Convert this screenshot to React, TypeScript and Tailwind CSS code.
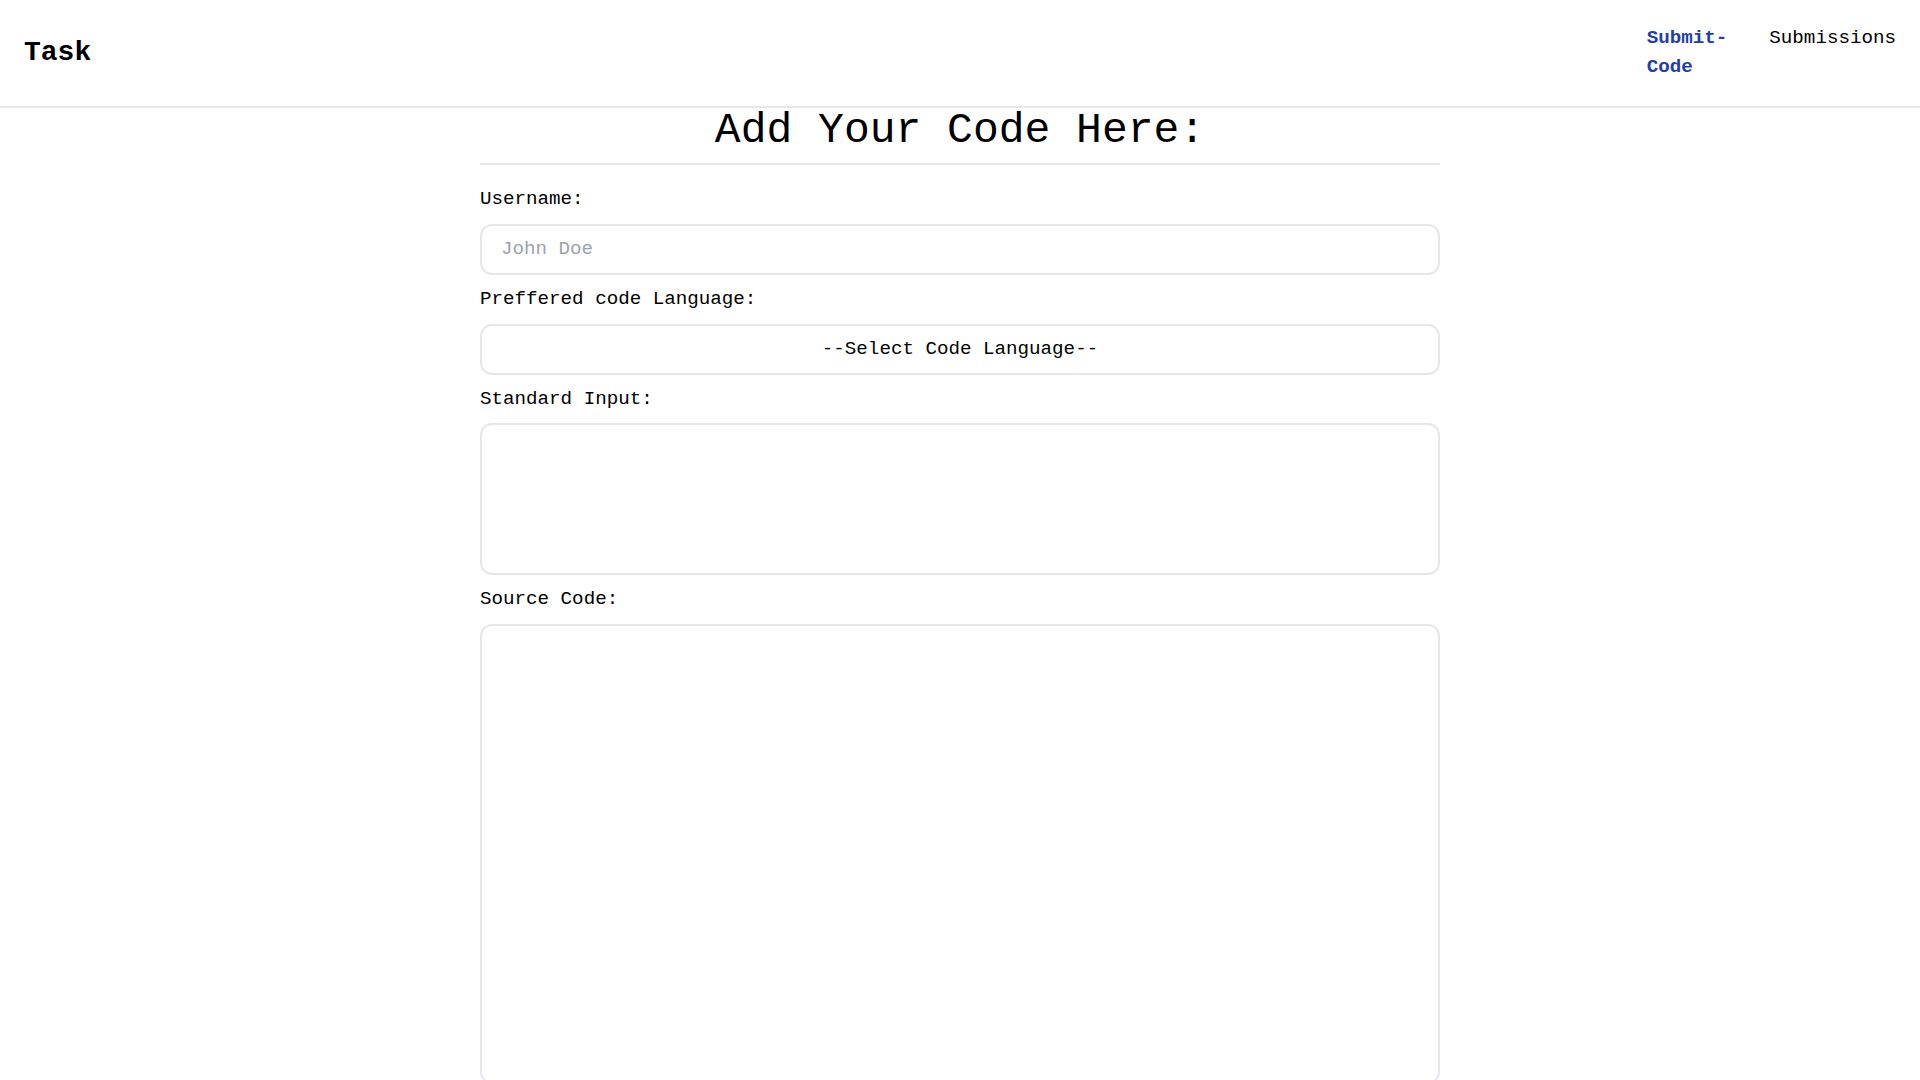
import { useState } from "react";

const languages = ["C++", "Java", "JavaScript", "Python"];

function Field({ label, children }: { label: string; children: React.ReactNode }) {
    return (
        <div className="flex flex-col gap-[10px]">
            <label className="text-[19.2px] leading-[28.8px] text-black">{label}</label>
            {children}
        </div>
    );
}

export default function App() {
    const [username, setUsername] = useState("");
    const [language, setLanguage] = useState("");
    const [stdin, setStdin] = useState("");
    const [code, setCode] = useState("");

    return (
        <div className="min-h-screen w-full bg-white text-black font-['Liberation_Mono',monospace]">
            {/* Top navigation */}
            <header className="flex h-[108px] items-center justify-between border-b-2 border-[#e5e7eb] px-6">
                <h2 className="text-[28px] font-bold leading-none">Task</h2>
                <nav className="flex items-start gap-[42px] text-[19.2px] leading-[28.8px]">
                    <a href="#" className="w-min font-bold text-[#1e40af]">Submit-Code</a>
                    <a href="#" className="text-black">Submissions</a>
                </nav>
            </header>

            <main className="mx-auto w-[960px]">
                <h1 className="border-b-2 border-[#e5e7eb] pb-[9px] text-center text-[43px] leading-[46px]">
                    Add Your Code Here:
                </h1>

                <form className="mt-[20px] flex flex-col gap-[10px]" onSubmit={(e) => e.preventDefault()}>
                    <Field label="Username:">
                        <input
                            type="text"
                            value={username}
                            onChange={(e) => setUsername(e.target.value)}
                            placeholder="John Doe"
                            className="h-[51px] w-full rounded-xl border-2 border-[#e5e7eb] px-[19px] text-[19.2px] outline-none placeholder:text-[#9ca3af]"
                        />
                    </Field>

                    <Field label="Preffered code Language:">
                        <select
                            value={language}
                            onChange={(e) => setLanguage(e.target.value)}
                            className="h-[51px] w-full appearance-none rounded-xl border-2 border-[#e5e7eb] bg-white px-4 text-center text-[19.2px] text-black outline-none [text-align-last:center]"
                        >
                            <option value="">--Select Code Language--</option>
                            {languages.map((l) => (
                                <option key={l} value={l}>{l}</option>
                            ))}
                        </select>
                    </Field>

                    <Field label="Standard Input:">
                        <textarea
                            value={stdin}
                            onChange={(e) => setStdin(e.target.value)}
                            className="h-[152px] w-full resize-none rounded-xl border-2 border-[#e5e7eb] p-4 text-[19.2px] outline-none"
                        />
                    </Field>

                    <Field label="Source Code:">
                        <textarea
                            value={code}
                            onChange={(e) => setCode(e.target.value)}
                            className="h-[460px] w-full resize-none rounded-xl border-2 border-[#e5e7eb] p-4 text-[19.2px] outline-none"
                        />
                    </Field>
                </form>
            </main>
        </div>
    );
}
